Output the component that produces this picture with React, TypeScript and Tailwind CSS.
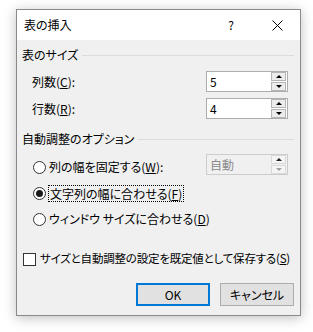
import React from "react";

const font = {
  fontFamily: '"Noto Sans CJK JP", "Noto Sans", sans-serif',
};

function Spin({ value, disabled }: { value: string; disabled?: boolean }) {
  return (
    <div
      className={`flex h-[21px] w-[82px] items-center border ${
        disabled ? "border-[#cccccc] bg-[#f0f0f0] text-[#8a8a8a]" : "border-[#adadad] bg-white text-black"
      }`}
    >
      <div className="flex-1 pl-[3px] text-[12px] leading-none">{value}</div>
      <div className="mr-[1px] flex h-[19px] w-[15px] flex-col gap-[1px]">
        <div className={`flex flex-1 items-center justify-center border ${disabled ? "border-[#d9d9d9] bg-[#f4f4f4]" : "border-[#b5b5b5] bg-[#ececec]"}`}>
          <div className={`h-0 w-0 border-x-[3px] border-b-[3px] border-x-transparent ${disabled ? "border-b-[#222]" : "border-b-black"}`} />
        </div>
        <div className={`flex flex-1 items-center justify-center border ${disabled ? "border-[#d9d9d9] bg-[#f4f4f4]" : "border-[#b5b5b5] bg-[#ececec]"}`}>
          <div className={`h-0 w-0 border-x-[3px] border-t-[3px] border-x-transparent ${disabled ? "border-t-[#a0a0a0]" : "border-t-black"}`} />
        </div>
      </div>
    </div>
  );
}

function GroupHeader({ label }: { label: string }) {
  return (
    <div className="flex h-[16px] items-center pl-[5px] pr-[6px]">
      <span className="text-[12px] leading-none">{label}</span>
      <div className="ml-[4px] h-px flex-1 bg-[#dcdcdc]" />
    </div>
  );
}

function Radio({ checked }: { checked?: boolean }) {
  return (
    <div className="flex h-[13px] w-[13px] items-center justify-center rounded-full border border-[#333] bg-white">
      {checked && <div className="h-[7px] w-[7px] rounded-full bg-[#1a1a1a]" />}
    </div>
  );
}

export default function App() {
  return (
    <div className="h-[332px] w-[313px] bg-white pl-[16px] pt-[9px]" style={font}>
      <div className="flex h-[307px] w-[285px] flex-col border border-[#8a8a8a] bg-[#f0f0f0] text-black shadow-[0_2px_12px_rgba(0,0,0,0.25)] [font-feature-settings:'palt']">
        {/* title bar */}
        <div className="flex h-[30px] items-center bg-white">
          <span className="pl-[7px] text-[12px]">表の挿入</span>
          <span className="ml-auto w-[46px] text-center text-[12px]">?</span>
          <div className="flex w-[46px] justify-center">
            <svg width="11" height="11" viewBox="0 0 11 11">
              <path d="M0.5 0.5 L10.5 10.5 M10.5 0.5 L0.5 10.5" stroke="#000" strokeWidth="1" fill="none" />
            </svg>
          </div>
        </div>

        <div className="mt-[7px]">
          <GroupHeader label="表のサイズ" />
        </div>

        <div className="mt-[8px] flex h-[21px] items-center pl-[15px] pr-[12px]">
          <span className="text-[12px]">
            列数(<u>C</u>):
          </span>
          <div className="ml-auto">
            <Spin value="5" />
          </div>
        </div>
        <div className="mt-[6px] flex h-[21px] items-center pl-[15px] pr-[12px]">
          <span className="text-[12px]">
            行数(<u>R</u>):
          </span>
          <div className="ml-auto">
            <Spin value="4" />
          </div>
        </div>

        <div className="mt-[12px]">
          <GroupHeader label="自動調整のオプション" />
        </div>

        <div className="mt-[7px] flex h-[26px] items-center pl-[16px] pr-[12px]">
          <Radio />
          <span className="ml-[3px] text-[12px]">
            列の幅を固定する(<u>W</u>):
          </span>
          <div className="ml-auto self-start">
            <Spin value="自動" disabled />
          </div>
        </div>
        <div className="flex h-[26px] items-center pl-[16px]">
          <Radio checked />
          <span className="ml-[2px] border border-dotted border-black px-[1px] text-[12px] leading-[15px]">
            文字列の幅に合わせる(<u>F</u>)
          </span>
        </div>
        <div className="flex h-[26px] items-center pl-[16px]">
          <Radio />
          <span className="ml-[3px] text-[12px]">
            ウィンドウ サイズに合わせる(<u>D</u>)
          </span>
        </div>

        <div className="mt-[20px] flex h-[14px] items-center pl-[6px]">
          <div className="h-[13px] w-[13px] shrink-0 border border-[#333] bg-white" />
          <span className="ml-[4px] whitespace-nowrap text-[11.5px] tracking-[-0.2px]">
            サイズと自動調整の設定を既定値として保存する(<u>S</u>)
          </span>
        </div>

        <div className="mt-[17px] flex justify-end gap-[10px] pr-[6px]">
          <button className="h-[23px] w-[74px] border-2 border-[#0078d7] bg-[#e1e1e1] text-[12px]">
            OK
          </button>
          <button className="h-[23px] w-[74px] border border-[#adadad] bg-[#e1e1e1] text-[12px]">
            キャンセル
          </button>
        </div>
      </div>
    </div>
  );
}
